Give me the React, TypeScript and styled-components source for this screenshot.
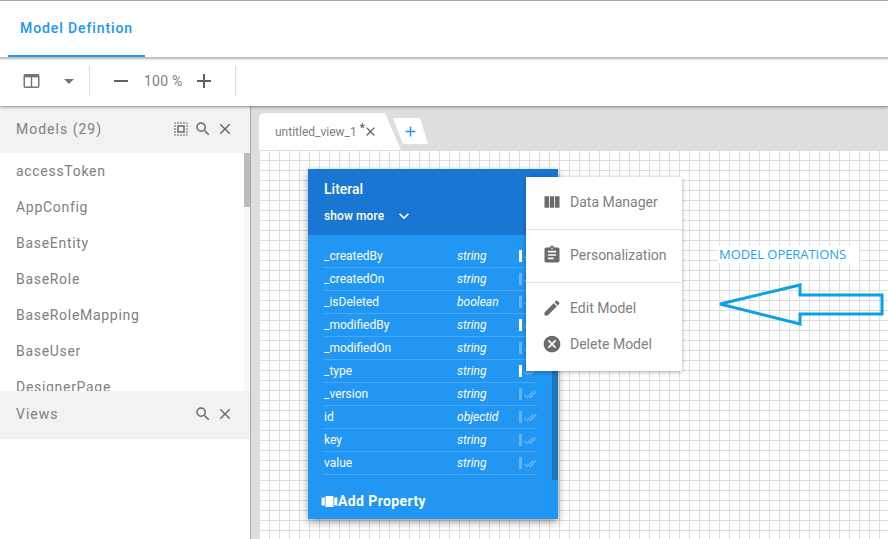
import styled, { createGlobalStyle } from "styled-components";
import {
  MdAdd,
  MdAssignment,
  MdCancel,
  MdClose,
  MdDoneAll,
  MdKeyboardArrowDown,
  MdRemove,
  MdSearch,
  MdSelectAll,
  MdViewCarousel,
  MdViewColumn,
  MdEdit,
  MdArrowDropDown,
} from "react-icons/md";

const models = [
  "accessToken",
  "AppConfig",
  "BaseEntity",
  "BaseRole",
  "BaseRoleMapping",
  "BaseUser",
  "DesignerPage",
];

const fields = [
  { name: "_createdBy", type: "string", on: true },
  { name: "_createdOn", type: "string", on: false },
  { name: "_isDeleted", type: "boolean", on: false },
  { name: "_modifiedBy", type: "string", on: true },
  { name: "_modifiedOn", type: "string", on: false },
  { name: "_type", type: "string", on: true },
  { name: "_version", type: "string", on: false },
  { name: "id", type: "objectid", on: false },
  { name: "key", type: "string", on: false },
  { name: "value", type: "string", on: false },
];

const App = () => {
  return (
    <Page>
      <GlobalStyle />
      <TopBar>
        <ActiveTab>Model Defintion</ActiveTab>
      </TopBar>

      <Toolbar>
        <ToolGroup>
          <LayoutIcon viewBox="0 0 16 14">
            <rect x="0.75" y="0.75" width="14.5" height="12.5" rx="1" fill="none" stroke="#757575" strokeWidth="1.5" />
            <rect x="0.75" y="0.75" width="14.5" height="2.6" fill="#757575" />
            <rect x="7.3" y="2" width="1.4" height="11" fill="#757575" />
          </LayoutIcon>
          <Caret>
            <MdArrowDropDown />
          </Caret>
        </ToolGroup>
        <ZoomGroup>
          <ZoomButton>
            <MdRemove />
          </ZoomButton>
          <ZoomValue>100 %</ZoomValue>
          <ZoomButton>
            <MdAdd />
          </ZoomButton>
        </ZoomGroup>
      </Toolbar>

      <Main>
        <Sidebar>
          <PanelHeader>
            <PanelTitle>Models (29)</PanelTitle>
            <PanelIcons>
              <MdSelectAll />
              <MdSearch />
              <MdClose />
            </PanelIcons>
          </PanelHeader>
          <ModelList>
            <ScrollThumb />
            {models.map((m) => (
              <ModelItem key={m}>{m}</ModelItem>
            ))}
          </ModelList>
          <PanelHeader>
            <PanelTitle>Views</PanelTitle>
            <PanelIcons>
              <MdSearch />
              <MdClose />
            </PanelIcons>
          </PanelHeader>
        </Sidebar>

        <Workspace>
          <TabStrip>
            <ViewTab>
              <span>untitled_view_1</span>
              <Star>*</Star>
              <TabClose>
                <MdClose />
              </TabClose>
            </ViewTab>
            <PlusTab>
              <MdAdd />
            </PlusTab>
          </TabStrip>

          <Canvas>
            <Card>
              <CardHeader>
                <CardTitle>Literal</CardTitle>
                <ShowMore>
                  show more
                  <MdKeyboardArrowDown />
                </ShowMore>
              </CardHeader>
              <CardBody>
                <CardScroll />
                {fields.map((f) => (
                  <FieldRow key={f.name}>
                    <FieldName>{f.name}</FieldName>
                    <FieldType>{f.type}</FieldType>
                    <FieldBar $on={f.on} />
                    <FieldCheck>
                      <MdDoneAll />
                    </FieldCheck>
                  </FieldRow>
                ))}
                <AddProperty>
                  <MdViewCarousel />
                  Add Property
                </AddProperty>
              </CardBody>
            </Card>

            <Menu>
              <MenuSection>
                <MenuItem>
                  <MdViewColumn />
                  Data Manager
                </MenuItem>
              </MenuSection>
              <MenuSection>
                <MenuItem>
                  <MdAssignment />
                  Personalization
                </MenuItem>
              </MenuSection>
              <LastSection>
                <MenuItem>
                  <MdEdit />
                  Edit Model
                </MenuItem>
                <MenuItem>
                  <MdCancel />
                  Delete Model
                </MenuItem>
              </LastSection>
            </Menu>

            <Note>MODEL OPERATIONS</Note>
            <Arrow viewBox="0 0 170 44">
              <path
                d="M2 21 L82 2 L82 12 L164 12 L164 31 L82 31 L82 41 Z"
                fill="none"
                stroke="#0ca0e4"
                strokeWidth="3"
              />
            </Arrow>
          </Canvas>
        </Workspace>
      </Main>
    </Page>
  );
};

export default App;

const GlobalStyle = createGlobalStyle`
  html, body {
    margin: 0;
    padding: 0;
    background: #fff;
  }
  * {
    box-sizing: border-box;
  }
`;

const Page = styled.div`
  width: 888px;
  height: 539px;
  overflow: hidden;
  display: flex;
  flex-direction: column;
  font-family: Roboto, "Liberation Sans", sans-serif;
  background: #fff;
`;

const TopBar = styled.div`
  height: 58px;
  flex: none;
  display: flex;
  padding-left: 8px;
  background: #fff;
  border-top: 1px solid #a8a8a8;
  border-bottom: 1px solid #bdbdbd;
  box-shadow: 0 1px 2px rgba(0, 0, 0, 0.3);
  position: relative;
  z-index: 3;
`;

const ActiveTab = styled.div`
  width: 137px;
  height: 56px;
  padding: 18px 0 0 12px;
  font-size: 14px;
  line-height: 18px;
  font-weight: 500;
  letter-spacing: 0.9px;
  color: #2196f3;
  border-bottom: 2px solid #2196f3;
`;

const Toolbar = styled.div`
  height: 48px;
  flex: none;
  display: flex;
  align-items: center;
  padding-bottom: 2px;
  background: #fff;
  box-shadow: 0 1px 3px rgba(0, 0, 0, 0.45);
  position: relative;
  z-index: 2;
`;

const ToolGroup = styled.div`
  width: 90px;
  height: 30px;
  display: flex;
  align-items: center;
  padding-left: 23px;
  border-right: 1px solid #dcdcdc;
`;

const LayoutIcon = styled.svg`
  width: 17px;
  height: 14px;
`;

const Caret = styled.div`
  display: flex;
  margin-left: 17px;
  font-size: 24px;
  color: #757575;
`;

const ZoomGroup = styled.div`
  width: 146px;
  height: 30px;
  display: flex;
  align-items: center;
  padding-left: 19px;
  border-right: 1px solid #dcdcdc;
`;

const ZoomButton = styled.div`
  display: flex;
  font-size: 24px;
  color: #616161;
`;

const ZoomValue = styled.div`
  width: 59px;
  padding-left: 11px;
  font-size: 14px;
  letter-spacing: 0.2px;
  color: #808080;
  white-space: nowrap;
`;

const Main = styled.div`
  flex: 1;
  display: flex;
  min-height: 0;
`;

const Sidebar = styled.div`
  width: 251px;
  flex: none;
  background: #fff;
  border-right: 1px solid #a9a9a9;
`;

const PanelHeader = styled.div`
  height: 47px;
  display: flex;
  align-items: center;
  justify-content: space-between;
  padding: 0 16px 1px 16px;
  background: #f2f2f2;
  &:last-child {
    height: 48px;
    padding-bottom: 3px;
  }
`;

const PanelTitle = styled.div`
  font-size: 14px;
  letter-spacing: 1px;
  color: #808080;
`;

const PanelIcons = styled.div`
  display: flex;
  align-items: center;
  gap: 4px;
  font-size: 18px;
  color: #6b6b6b;
`;

const ModelList = styled.div`
  height: 238px;
  overflow: hidden;
  position: relative;
  &::after {
    content: "";
    position: absolute;
    top: 0;
    right: 0;
    bottom: 0;
    width: 6px;
    background: #f8f8f8;
  }
`;

const ScrollThumb = styled.div`
  position: absolute;
  top: 0;
  right: 0;
  width: 6px;
  height: 54px;
  background: #bdbdbd;
  z-index: 1;
`;

const ModelItem = styled.div`
  height: 36px;
  padding-left: 16px;
  font-size: 14px;
  line-height: 36px;
  letter-spacing: 0.7px;
  color: #808080;
`;

const Workspace = styled.div`
  flex: 1;
  display: flex;
  flex-direction: column;
  padding-left: 8px;
  background: #dedede;
  min-width: 0;
`;

const TabStrip = styled.div`
  height: 44px;
  flex: none;
  display: flex;
  align-items: flex-end;
`;

const ViewTab = styled.div`
  width: 142px;
  height: 37px;
  flex: none;
  display: flex;
  align-items: center;
  padding-left: 16px;
  font-size: 12px;
  color: #808080;
  background: #fff;
  border-top-left-radius: 5px;
  clip-path: polygon(0 0, 126px 0, 142px 100%, 0 100%);
`;

const Star = styled.span`
  margin: -8px 0 0 3px;
  font-size: 12px;
  color: #555;
`;

const TabClose = styled.span`
  display: flex;
  margin-left: -2px;
  font-size: 15px;
  color: #666;
`;

const PlusTab = styled.div`
  width: 35px;
  height: 26px;
  flex: none;
  margin: 0 0 6px -8px;
  display: flex;
  align-items: center;
  justify-content: center;
  font-size: 17px;
  color: #2196f3;
  background: #fff;
  clip-path: polygon(0 0, 27px 0, 35px 100%, 10px 100%);
`;

const Canvas = styled.div`
  flex: 1;
  position: relative;
  background-color: #fff;
  background-image: linear-gradient(#dedede 1px, transparent 1px),
    linear-gradient(90deg, #dedede 1px, transparent 1px);
  background-size: 10px 10px;
`;

const Card = styled.div`
  position: absolute;
  left: 49px;
  top: 19px;
  width: 250px;
  height: 350px;
  display: flex;
  flex-direction: column;
  color: #fff;
  box-shadow: 0 3px 8px rgba(0, 0, 0, 0.4);
`;

const CardHeader = styled.div`
  height: 66px;
  flex: none;
  padding: 11px 16px 0;
  background: #1976d2;
`;

const CardTitle = styled.div`
  font-size: 14px;
  line-height: 18px;
  font-weight: 500;
`;

const ShowMore = styled.div`
  margin-top: 8px;
  display: flex;
  align-items: center;
  font-size: 12px;
  font-weight: 500;
  line-height: 18px;
  letter-spacing: 0.1px;
  svg {
    margin-left: 10px;
    font-size: 20px;
  }
`;

const CardBody = styled.div`
  flex: 1;
  position: relative;
  padding: 10px 22px 0 16px;
  background: #2196f3;
`;

const CardScroll = styled.div`
  position: absolute;
  top: 0;
  right: 0;
  width: 6px;
  height: 245px;
  background: #1976bd;
`;

const FieldRow = styled.div`
  height: 23px;
  display: flex;
  align-items: center;
  border-bottom: 1px solid #4aa9f5;
  font-size: 12px;
`;

const FieldName = styled.span`
  width: 133px;
  flex: none;
`;

const FieldType = styled.span`
  width: 62px;
  flex: none;
  font-style: italic;
`;

const FieldBar = styled.span<{ $on: boolean }>`
  width: 3px;
  height: 12px;
  flex: none;
  background: ${({ $on }) => ($on ? "#fff" : "#64b5f6")};
`;

const FieldCheck = styled.span`
  display: flex;
  margin-left: 2px;
  font-size: 13px;
  color: #7fc0f7;
`;

const AddProperty = styled.div`
  margin: 16px 0 0 -4px;
  display: flex;
  align-items: center;
  font-size: 14px;
  font-weight: 700;
  line-height: 20px;
  letter-spacing: 0.4px;
  svg {
    font-size: 19px;
    margin-right: -1px;
    flex: none;
  }
`;

const Menu = styled.div`
  position: absolute;
  left: 267px;
  top: 27px;
  width: 156px;
  height: 194px;
  background: #fff;
  box-shadow: 0 1px 4px rgba(0, 0, 0, 0.35);
  display: flex;
  flex-direction: column;
`;

const MenuSection = styled.div`
  height: 53px;
  display: flex;
  align-items: center;
  padding-bottom: 2px;
  border-bottom: 1px solid #e0e0e0;
`;

const LastSection = styled.div`
  padding-top: 7px;
  display: flex;
  flex-direction: column;
`;

const MenuItem = styled.div`
  height: 36px;
  display: flex;
  align-items: center;
  gap: 8px;
  padding-left: 16px;
  font-size: 14px;
  color: #808080;
  svg {
    font-size: 20px;
    flex: none;
    color: #6b6b6b;
  }
`;

const Note = styled.div`
  position: absolute;
  left: 459px;
  top: 96px;
  width: 141px;
  height: 17px;
  padding-left: 1px;
  background: #fff;
  font-family: "Open Sans", sans-serif;
  font-size: 13px;
  line-height: 17px;
  letter-spacing: -0.05px;
  color: #1ea5e8;
  white-space: nowrap;
`;

const Arrow = styled.svg`
  position: absolute;
  left: 459px;
  top: 133px;
  width: 170px;
  height: 44px;
`;
